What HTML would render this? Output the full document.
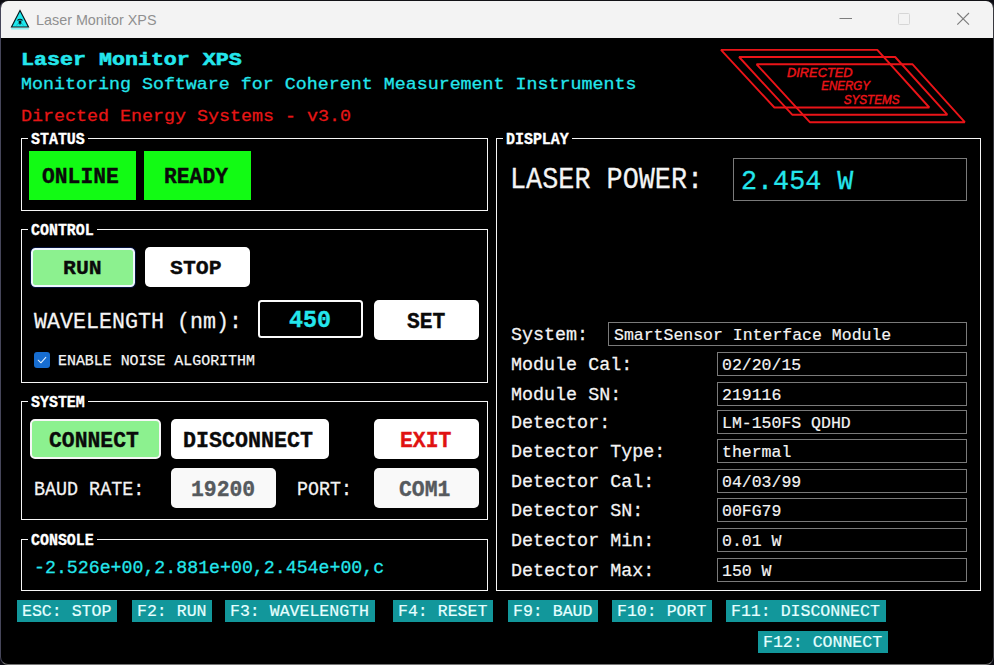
<!DOCTYPE html>
<html><head><meta charset="utf-8"><title>Laser Monitor XPS</title>
<style>
html,body{margin:0;padding:0;}
body{width:994px;height:665px;overflow:hidden;background:#0b0b12;position:relative;font-family:"Liberation Mono",monospace;}
#win{position:absolute;left:0;top:0;width:994px;height:665px;box-sizing:border-box;border:1px solid;border-color:#121216 #38383e #767676 #46465a;border-radius:8px;background:#000;overflow:hidden;}
#tb{position:absolute;left:0;top:0;width:100%;height:37px;background:#f3f3f3;}
#tt{position:absolute;left:35.5px;top:10px;font-family:"Liberation Sans",sans-serif;font-size:15px;line-height:18px;color:#909090;white-space:pre;transform-origin:0 50%;transform:scaleX(0.957);}
#cl{position:absolute;left:-1px;top:-1px;width:994px;height:665px;}
.m{position:absolute;white-space:pre;line-height:1;transform-origin:0 50%;font-family:"Liberation Mono",monospace;}
.b{position:absolute;}
</style></head><body>
<div id="win">
<div id="tb"></div>
<div id="cl">
<div id="tt" style="left:35.9px;top:10.6px">Laser Monitor XPS</div>
<svg class="b" style="left:8px;top:6px" width="26" height="26" viewBox="0 0 26 26">
<path d="M3.2 22.6 H20.8" stroke="#35ecef" stroke-width="1.6" opacity="0.55" fill="none"/>
<path d="M12 4.4 L20.5 21.0 L3.5 21.0 Z" fill="#1ce8ee" stroke="#07181c" stroke-width="1.15" stroke-linejoin="miter"/>
<path d="M9.5 14.5 Q12 11.9 14.5 14.5" fill="none" stroke="#07181c" stroke-width="1.1"/>
<path d="M12 16 L8.8 18.9 M12 16 L15.2 18.9" fill="none" stroke="#07181c" stroke-width="0.8" stroke-dasharray="1 0.9"/>
<path d="M12 15.2 V18.6" fill="none" stroke="#07181c" stroke-width="1.3"/>
<circle cx="12" cy="16" r="1.45" fill="#07181c"/>
</svg>
<svg class="b" style="left:830px;top:5px" width="150" height="28" viewBox="0 0 150 28">
<path d="M9.5 13.5 H22" stroke="#7d7d7d" stroke-width="1" fill="none"/>
<rect x="68.5" y="8.5" width="11" height="11" rx="1" fill="none" stroke="#d6d6d6" stroke-width="1"/>
<path d="M127.3 8 L139 19.7 M139 8 L127.3 19.7" stroke="#7d7d7d" stroke-width="1.1" fill="none"/>
</svg>
<svg class="b" style="left:710px;top:40px" width="270" height="95" viewBox="710 40 270 95">
<g fill="none" stroke="#ea1418" stroke-width="1.9" stroke-linejoin="bevel">
<path d="M721 49.9 H877.3 L929.3 107.5 H774.4 Z"/>
<path d="M739.1 57.0 H895.2 L947.3 114.7 H792.2 Z"/>
<path d="M756.6 64.3 H912.6 L964.8 122.2 H809.8 Z"/>
</g>
<g font-family="Liberation Sans, sans-serif" font-style="italic" font-weight="normal" font-size="12.2px" fill="#ea1418" stroke="#ea1418" stroke-width="0.45">
<text x="787" y="76.6" textLength="65.6" lengthAdjust="spacingAndGlyphs">DIRECTED</text>
<text x="821.3" y="89.6" textLength="48.6" lengthAdjust="spacingAndGlyphs">ENERGY</text>
<text x="843.7" y="103.9" textLength="55.8" lengthAdjust="spacingAndGlyphs">SYSTEMS</text>
</g>
</svg>
<div class="m" style="left:21.10px;top:50.56px;font-size:18.07px;font-weight:bold;color:#24e6ec;transform:scaleX(1.1982);-webkit-text-stroke:0.55px #24e6ec;">Laser Monitor XPS</div>
<div class="m" style="left:21.30px;top:77.07px;font-size:16.09px;font-weight:normal;color:#24e6ec;transform:scaleX(1.1391);-webkit-text-stroke:0.26px #24e6ec;">Monitoring Software for Coherent Measurement Instruments</div>
<div class="m" style="left:21.30px;top:107.76px;font-size:17.16px;font-weight:normal;color:#e61616;transform:scaleX(1.0685);-webkit-text-stroke:0.26px #e61616;">Directed Energy Systems - v3.0</div>
<div class="b" style="left:21px;top:138px;width:467px;height:73px;border:1px solid #f6f6f6;box-sizing:border-box;"></div>
<div class="b" style="left:28px;top:138px;width:60px;height:1px;background:#000;"></div>
<div class="m" style="left:31.20px;top:133.22px;font-size:15.64px;font-weight:bold;color:#ffffff;transform:scaleX(0.9559);-webkit-text-stroke:0.35px #ffffff;">STATUS</div>
<div class="b" style="left:21px;top:229px;width:467px;height:154px;border:1px solid #f6f6f6;box-sizing:border-box;"></div>
<div class="b" style="left:28px;top:229px;width:69px;height:1px;background:#000;"></div>
<div class="m" style="left:31.20px;top:224.22px;font-size:15.64px;font-weight:bold;color:#ffffff;transform:scaleX(0.9559);-webkit-text-stroke:0.35px #ffffff;">CONTROL</div>
<div class="b" style="left:21px;top:401px;width:467px;height:119px;border:1px solid #f6f6f6;box-sizing:border-box;"></div>
<div class="b" style="left:28px;top:401px;width:60px;height:1px;background:#000;"></div>
<div class="m" style="left:31.20px;top:396.22px;font-size:15.64px;font-weight:bold;color:#ffffff;transform:scaleX(0.9559);-webkit-text-stroke:0.35px #ffffff;">SYSTEM</div>
<div class="b" style="left:21px;top:539px;width:467px;height:52px;border:1px solid #f6f6f6;box-sizing:border-box;"></div>
<div class="b" style="left:28px;top:539px;width:69px;height:1px;background:#000;"></div>
<div class="m" style="left:31.20px;top:534.22px;font-size:15.64px;font-weight:bold;color:#ffffff;transform:scaleX(0.9559);-webkit-text-stroke:0.35px #ffffff;">CONSOLE</div>
<div class="b" style="left:496px;top:138px;width:485px;height:453px;border:1px solid #f6f6f6;box-sizing:border-box;"></div>
<div class="b" style="left:503px;top:138px;width:69px;height:1px;background:#000;"></div>
<div class="m" style="left:506.20px;top:133.22px;font-size:15.64px;font-weight:bold;color:#ffffff;transform:scaleX(0.9559);-webkit-text-stroke:0.35px #ffffff;">DISPLAY</div>
<div class="b" style="left:29px;top:151px;width:107px;height:49px;background:#12fb14;"></div>
<div class="b" style="left:144px;top:151px;width:107px;height:49px;background:#12fb14;"></div>
<div class="m" style="left:42.20px;top:167.02px;font-size:21.25px;font-weight:bold;color:#0a0a0a;transform:scaleX(1.0036);-webkit-text-stroke:0.35px #0a0a0a;">ONLINE</div>
<div class="m" style="left:163.80px;top:167.02px;font-size:21.25px;font-weight:bold;color:#0a0a0a;transform:scaleX(1.0036);-webkit-text-stroke:0.35px #0a0a0a;">READY</div>
<div class="b" style="left:30.5px;top:247.5px;width:104px;height:39px;background:#8cf18f;border:2px solid #eef6ff;border-radius:4.5px;box-sizing:border-box;box-shadow:0 0 0 1px #06123c;"></div>
<div class="b" style="left:145px;top:247px;width:105px;height:40px;background:#ffffff;border-radius:5px;"></div>
<div class="m" style="left:62.65px;top:259.45px;font-size:20.95px;font-weight:bold;color:#0a0a0a;transform:scaleX(1.0261);-webkit-text-stroke:0.35px #0a0a0a;">RUN</div>
<div class="m" style="left:170.40px;top:259.45px;font-size:20.95px;font-weight:bold;color:#0a0a0a;transform:scaleX(1.0261);-webkit-text-stroke:0.35px #0a0a0a;">STOP</div>
<div class="m" style="left:34.00px;top:312.12px;font-size:22.16px;font-weight:normal;color:#f4f4f4;transform:scaleX(0.9774);-webkit-text-stroke:0.26px #f4f4f4;">WAVELENGTH (nm):</div>
<div class="b" style="left:258px;top:300px;width:105px;height:38px;border:2px solid #fbfbfb;border-radius:3.5px;box-sizing:border-box;"></div>
<div class="m" style="left:289.00px;top:308.66px;font-size:23.68px;font-weight:bold;color:#24e6ec;transform:scaleX(0.9851);-webkit-text-stroke:0.35px #24e6ec;">450</div>
<div class="b" style="left:374px;top:300px;width:105px;height:40px;background:#ffffff;border-radius:5px;"></div>
<div class="m" style="left:406.60px;top:312.08px;font-size:21.56px;font-weight:bold;color:#0a0a0a;transform:scaleX(0.9894);-webkit-text-stroke:0.35px #0a0a0a;">SET</div>
<div class="b" style="left:34px;top:352px;width:15.5px;height:15.5px;background:#176dd0;border-radius:3px;"></div>
<svg class="b" style="left:34px;top:352px" width="16" height="16" viewBox="0 0 16 16"><path d="M4.2 8.2 L6.9 10.8 L11.8 5.4" fill="none" stroke="#e4f2ff" stroke-width="1.05" stroke-linecap="round" stroke-linejoin="round"/></svg>
<div class="m" style="left:57.80px;top:354.44px;font-size:15.49px;font-weight:normal;color:#f4f4f4;transform:scaleX(0.9631);-webkit-text-stroke:0.25px #f4f4f4;">ENABLE NOISE ALGORITHM</div>
<div class="b" style="left:30px;top:419px;width:131px;height:40px;background:#8cf18f;border:2px solid #f6f6f6;border-radius:5px;box-sizing:border-box;"></div>
<div class="b" style="left:171px;top:419px;width:158px;height:40px;background:#ffffff;border-radius:5px;"></div>
<div class="b" style="left:374px;top:419px;width:105px;height:40px;background:#ffffff;border-radius:5px;"></div>
<div class="m" style="left:49.02px;top:430.98px;font-size:21.56px;font-weight:bold;color:#0a0a0a;transform:scaleX(0.9933);-webkit-text-stroke:0.35px #0a0a0a;">CONNECT</div>
<div class="m" style="left:183.40px;top:430.98px;font-size:21.56px;font-weight:bold;color:#0a0a0a;transform:scaleX(1.0049);-webkit-text-stroke:0.35px #0a0a0a;">DISCONNECT</div>
<div class="m" style="left:399.50px;top:431.28px;font-size:21.56px;font-weight:bold;color:#e01212;transform:scaleX(0.9933);-webkit-text-stroke:0.35px #e01212;">EXIT</div>
<div class="m" style="left:33.60px;top:481.11px;font-size:19.43px;font-weight:normal;color:#f4f4f4;transform:scaleX(0.9459);-webkit-text-stroke:0.26px #f4f4f4;">BAUD RATE:</div>
<div class="b" style="left:171px;top:468px;width:105px;height:40px;background:#f9f9f9;border-radius:5px;"></div>
<div class="m" style="left:190.88px;top:479.78px;font-size:21.56px;font-weight:bold;color:#565a5e;transform:scaleX(0.9933);-webkit-text-stroke:0.35px #565a5e;">19200</div>
<div class="m" style="left:297.00px;top:481.11px;font-size:19.43px;font-weight:normal;color:#f4f4f4;transform:scaleX(0.9433);-webkit-text-stroke:0.26px #f4f4f4;">PORT:</div>
<div class="b" style="left:374px;top:468px;width:105px;height:40px;background:#f9f9f9;border-radius:5px;"></div>
<div class="m" style="left:399.30px;top:479.78px;font-size:21.56px;font-weight:bold;color:#565a5e;transform:scaleX(0.9933);-webkit-text-stroke:0.35px #565a5e;">COM1</div>
<div class="m" style="left:33.50px;top:559.28px;font-size:18.82px;font-weight:normal;color:#24e6ec;transform:scaleX(0.9693);-webkit-text-stroke:0.26px #24e6ec;">-2.526e+00,2.881e+00,2.454e+00,c</div>
<div class="m" style="left:510.30px;top:167.32px;font-size:28.69px;font-weight:normal;color:#f4f4f4;transform:scaleX(0.9350);-webkit-text-stroke:0.26px #f4f4f4;">LASER POWER:</div>
<div class="b" style="left:733px;top:158px;width:233.5px;height:43px;border:1px solid #7a7a7a;box-sizing:border-box;"></div>
<div class="m" style="left:740.50px;top:167.78px;font-size:28.09px;font-weight:normal;color:#24e6ec;transform:scaleX(0.9523);-webkit-text-stroke:0.26px #24e6ec;">2.454 W</div>
<div class="m" style="left:510.80px;top:326.45px;font-size:19.13px;font-weight:normal;color:#f4f4f4;transform:scaleX(0.9609);-webkit-text-stroke:0.26px #f4f4f4;">System:</div>
<div class="b" style="left:608px;top:322px;width:359px;height:24px;border:1px solid #7a7a7a;box-sizing:border-box;"></div>
<div class="m" style="left:613.80px;top:326.56px;font-size:17.16px;font-weight:normal;color:#f4f4f4;transform:scaleX(0.9617);-webkit-text-stroke:0.18px #f4f4f4;">SmartSensor Interface Module</div>
<div class="m" style="left:510.80px;top:356.45px;font-size:19.13px;font-weight:normal;color:#f4f4f4;transform:scaleX(0.9609);-webkit-text-stroke:0.26px #f4f4f4;">Module Cal:</div>
<div class="b" style="left:717px;top:352px;width:250px;height:24px;border:1px solid #7a7a7a;box-sizing:border-box;"></div>
<div class="m" style="left:721.60px;top:356.56px;font-size:17.16px;font-weight:normal;color:#f4f4f4;transform:scaleX(0.9617);-webkit-text-stroke:0.18px #f4f4f4;">02/20/15</div>
<div class="m" style="left:510.80px;top:386.45px;font-size:19.13px;font-weight:normal;color:#f4f4f4;transform:scaleX(0.9609);-webkit-text-stroke:0.26px #f4f4f4;">Module SN:</div>
<div class="b" style="left:717px;top:382px;width:250px;height:24px;border:1px solid #7a7a7a;box-sizing:border-box;"></div>
<div class="m" style="left:721.60px;top:386.56px;font-size:17.16px;font-weight:normal;color:#f4f4f4;transform:scaleX(0.9617);-webkit-text-stroke:0.18px #f4f4f4;">219116</div>
<div class="m" style="left:510.80px;top:414.45px;font-size:19.13px;font-weight:normal;color:#f4f4f4;transform:scaleX(0.9609);-webkit-text-stroke:0.26px #f4f4f4;">Detector:</div>
<div class="b" style="left:717px;top:410px;width:250px;height:24px;border:1px solid #7a7a7a;box-sizing:border-box;"></div>
<div class="m" style="left:721.60px;top:414.56px;font-size:17.16px;font-weight:normal;color:#f4f4f4;transform:scaleX(0.9617);-webkit-text-stroke:0.18px #f4f4f4;">LM-150FS QDHD</div>
<div class="m" style="left:510.80px;top:443.45px;font-size:19.13px;font-weight:normal;color:#f4f4f4;transform:scaleX(0.9609);-webkit-text-stroke:0.26px #f4f4f4;">Detector Type:</div>
<div class="b" style="left:717px;top:439px;width:250px;height:24px;border:1px solid #7a7a7a;box-sizing:border-box;"></div>
<div class="m" style="left:721.60px;top:443.56px;font-size:17.16px;font-weight:normal;color:#f4f4f4;transform:scaleX(0.9617);-webkit-text-stroke:0.18px #f4f4f4;">thermal</div>
<div class="m" style="left:510.80px;top:473.45px;font-size:19.13px;font-weight:normal;color:#f4f4f4;transform:scaleX(0.9609);-webkit-text-stroke:0.26px #f4f4f4;">Detector Cal:</div>
<div class="b" style="left:717px;top:469px;width:250px;height:24px;border:1px solid #7a7a7a;box-sizing:border-box;"></div>
<div class="m" style="left:721.60px;top:473.56px;font-size:17.16px;font-weight:normal;color:#f4f4f4;transform:scaleX(0.9617);-webkit-text-stroke:0.18px #f4f4f4;">04/03/99</div>
<div class="m" style="left:510.80px;top:502.45px;font-size:19.13px;font-weight:normal;color:#f4f4f4;transform:scaleX(0.9609);-webkit-text-stroke:0.26px #f4f4f4;">Detector SN:</div>
<div class="b" style="left:717px;top:498px;width:250px;height:24px;border:1px solid #7a7a7a;box-sizing:border-box;"></div>
<div class="m" style="left:721.60px;top:502.56px;font-size:17.16px;font-weight:normal;color:#f4f4f4;transform:scaleX(0.9617);-webkit-text-stroke:0.18px #f4f4f4;">00FG79</div>
<div class="m" style="left:510.80px;top:532.45px;font-size:19.13px;font-weight:normal;color:#f4f4f4;transform:scaleX(0.9609);-webkit-text-stroke:0.26px #f4f4f4;">Detector Min:</div>
<div class="b" style="left:717px;top:528px;width:250px;height:24px;border:1px solid #7a7a7a;box-sizing:border-box;"></div>
<div class="m" style="left:721.60px;top:532.56px;font-size:17.16px;font-weight:normal;color:#f4f4f4;transform:scaleX(0.9617);-webkit-text-stroke:0.18px #f4f4f4;">0.01 W</div>
<div class="m" style="left:510.80px;top:562.45px;font-size:19.13px;font-weight:normal;color:#f4f4f4;transform:scaleX(0.9609);-webkit-text-stroke:0.26px #f4f4f4;">Detector Max:</div>
<div class="b" style="left:717px;top:558px;width:250px;height:24px;border:1px solid #7a7a7a;box-sizing:border-box;"></div>
<div class="m" style="left:721.60px;top:562.56px;font-size:17.16px;font-weight:normal;color:#f4f4f4;transform:scaleX(0.9617);-webkit-text-stroke:0.18px #f4f4f4;">150 W</div>
<div class="b" style="left:17px;top:600px;width:100px;height:22px;background:#12979b;"></div>
<div class="m" style="left:22.00px;top:604.09px;font-size:16.85px;font-weight:normal;color:#e6ffff;transform:scaleX(0.9820);-webkit-text-stroke:0.2px #e6ffff;">ESC: STOP</div>
<div class="b" style="left:132px;top:600px;width:80px;height:22px;background:#12979b;"></div>
<div class="m" style="left:137.00px;top:604.09px;font-size:16.85px;font-weight:normal;color:#e6ffff;transform:scaleX(0.9820);-webkit-text-stroke:0.2px #e6ffff;">F2: RUN</div>
<div class="b" style="left:225px;top:600px;width:150px;height:22px;background:#12979b;"></div>
<div class="m" style="left:230.00px;top:604.09px;font-size:16.85px;font-weight:normal;color:#e6ffff;transform:scaleX(0.9820);-webkit-text-stroke:0.2px #e6ffff;">F3: WAVELENGTH</div>
<div class="b" style="left:393px;top:600px;width:100px;height:22px;background:#12979b;"></div>
<div class="m" style="left:398.00px;top:604.09px;font-size:16.85px;font-weight:normal;color:#e6ffff;transform:scaleX(0.9820);-webkit-text-stroke:0.2px #e6ffff;">F4: RESET</div>
<div class="b" style="left:508px;top:600px;width:90px;height:22px;background:#12979b;"></div>
<div class="m" style="left:513.00px;top:604.09px;font-size:16.85px;font-weight:normal;color:#e6ffff;transform:scaleX(0.9820);-webkit-text-stroke:0.2px #e6ffff;">F9: BAUD</div>
<div class="b" style="left:612px;top:600px;width:100px;height:22px;background:#12979b;"></div>
<div class="m" style="left:617.00px;top:604.09px;font-size:16.85px;font-weight:normal;color:#e6ffff;transform:scaleX(0.9820);-webkit-text-stroke:0.2px #e6ffff;">F10: PORT</div>
<div class="b" style="left:726px;top:600px;width:160px;height:22px;background:#12979b;"></div>
<div class="m" style="left:731.00px;top:604.09px;font-size:16.85px;font-weight:normal;color:#e6ffff;transform:scaleX(0.9820);-webkit-text-stroke:0.2px #e6ffff;">F11: DISCONNECT</div>
<div class="b" style="left:758px;top:631px;width:130px;height:22px;background:#12979b;"></div>
<div class="m" style="left:763.00px;top:635.09px;font-size:16.85px;font-weight:normal;color:#e6ffff;transform:scaleX(0.9820);-webkit-text-stroke:0.2px #e6ffff;">F12: CONNECT</div>
</div>
</div>
</body></html>
